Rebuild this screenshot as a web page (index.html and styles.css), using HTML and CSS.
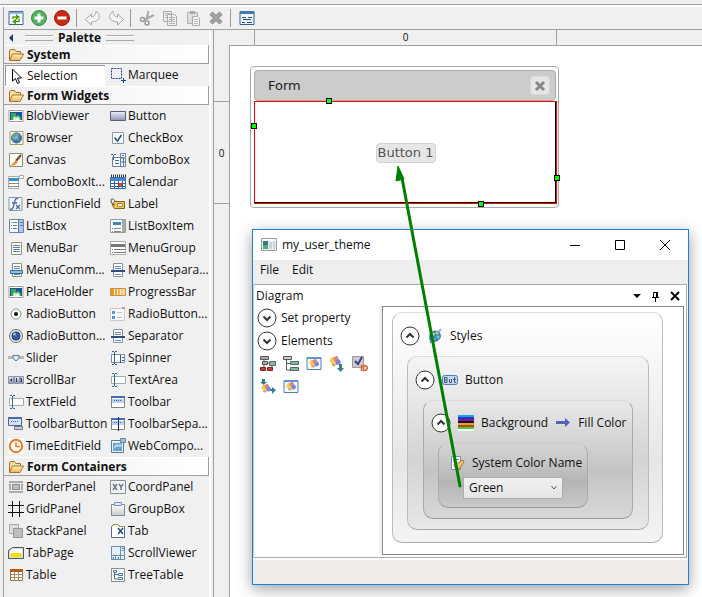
FILE: index.html
```html
<!DOCTYPE html>
<html lang="en">
<head>
<meta charset="utf-8">
<title>Form editor</title>
<link rel="stylesheet" href="styles.css">
</head>
<body>
<svg class="sprite" aria-hidden="true">
  <defs>
    <linearGradient id="gold" x2="0" y2="1"><stop offset="0" stop-color="#fff3c4"/><stop offset="1" stop-color="#edb54f"/></linearGradient>
    <linearGradient id="steel" x2="0" y2="1"><stop offset="0" stop-color="#eef2fa"/><stop offset="1" stop-color="#8c93b5"/></linearGradient>
    <linearGradient id="silver" x2="0" y2="1"><stop offset="0" stop-color="#fff"/><stop offset="1" stop-color="#ccc"/></linearGradient>
    <linearGradient id="orange" x2="1"><stop offset="0" stop-color="#ea8a12"/><stop offset="1" stop-color="#ffd48a"/></linearGradient>
    <radialGradient id="globe" cx=".35" cy=".3"><stop offset="0" stop-color="#d4ecff"/><stop offset="1" stop-color="#3672ab"/></radialGradient>
  </defs>
  <symbol id="folder" viewBox="0 0 16 16"><path d="M1.5 13V4l1-1.500h4L8 4.500h4.500V7" fill="#f7dfa0" stroke="#a8702c"/><path d="M1.500 13.500 4.500 7h11l-3.500 6.500z" fill="url(#gold)" stroke="#a8702c"/></symbol>
  <symbol id="reload" viewBox="0 0 16 16"><path fill="#fff" stroke="#3c6292" d="M1 1.500h14v13H1z"/><path fill="#88b7e5" d="M2 2h12v2H2z"/><path fill="none" stroke="#529b10" stroke-width="1.500" d="M5 9V7h4M11 9v2.500H7"/><path fill="#529b10" d="m8 4 4 3-4 3zM8 8.500l-4 3 4 3z"/></symbol>
  <symbol id="add" viewBox="0 0 16 16"><circle cx="8" cy="8" r="7.500" fill="#51b15d" stroke="#3a8e47"/><path stroke="#fff" stroke-width="3" d="M8 3.500v9M3.500 8h9"/></symbol>
  <symbol id="remove" viewBox="0 0 16 16"><circle cx="8" cy="8" r="7.500" fill="#c82b13" stroke="#a51c0c"/><path stroke="#fff" stroke-width="3" d="M3.500 8h9"/></symbol>
  <symbol id="undo" viewBox="0 0 16 16"><path d="M.5 9.500 6.500 4v3c2.500-.3 4.500-2 4.500-6 5 4.500 5 10-4.500 11v3z" fill="#f5f5f5" stroke="#a5a5a5"/></symbol>
  <symbol id="redo" viewBox="0 0 16 16"><path d="M15.500 9.500 9.500 4v3C7 6.700 5 5 5 1 0 5.500 0 11 9.500 12v3z" fill="#f5f5f5" stroke="#a5a5a5"/></symbol>
  <symbol id="cut" viewBox="0 0 16 16"><path d="m9.500 1-2 8M15 5 6 9.500" stroke="#a9a9a9" stroke-width="2"/><circle cx="3.500" cy="9.500" r="2" fill="none" stroke="#999" stroke-width="1.500"/><circle cx="8" cy="13" r="2" fill="none" stroke="#999" stroke-width="1.500"/></symbol>
  <symbol id="copy" viewBox="0 0 16 16"><path fill="#eee" stroke="#aaa" d="M1.500 1.500h8v10h-8zM5.500 4.500h7l2 2v9h-9z"/><path stroke="#b5b5b5" d="M3 3.500h5M3 5.500h2M3 7.500h2M7 7.500h6M7 9.500h6M7 11.500h6M7 13.500h6"/></symbol>
  <symbol id="paste" viewBox="0 0 16 16"><path fill="#ddd" stroke="#b0b0b0" d="M2.500 2.500h10v11h-10z"/><path fill="#aaa" d="M5 1h5v3H5z"/><path fill="#f3f3f3" stroke="#aaa" d="M7.500 6.500h5l2 2v7h-7z"/><path stroke="#bbb" d="M9 9.500h4M9 11.500h4M9 13.500h4"/></symbol>
  <symbol id="delete" viewBox="0 0 16 16"><path d="m3 3 10 10M13 3 3 13" stroke="#8b8b8b" stroke-width="4.500"/><path d="m3 3 10 10M13 3 3 13" stroke="#a3a3a3" stroke-width="2.500"/></symbol>
  <symbol id="layout" viewBox="0 0 16 16"><path fill="#f3f8ff" stroke="#2e5e9e" d="M1 1.500h14v13H1z"/><path fill="#3f79c0" d="M1 1h14v3H1z"/><path stroke="#244f83" d="M3 7.500h4M9 7.500h4M4 9.500h8M3 12.500h3M8 12.500h5"/></symbol>
  <symbol id="cursor" viewBox="0 0 16 16"><path fill="#fff" stroke="#000" d="M3.500 1v12l3-2.500 2 5 2-1-2-4.500h4z"/></symbol>
  <symbol id="marquee" viewBox="0 0 16 16"><path fill="none" stroke="#173e93" stroke-dasharray="2 1" d="M1.500 1.500h10v10h-10z"/><path stroke="#173e93" d="M11 13.500h5M13.500 11v5"/></symbol>
  <symbol id="picture" viewBox="0 0 16 16"><path fill="#fff" d="M0 1h16v14H0z"/><path fill="#fff" stroke="#999" d="M1 2.500h14v11H1z"/><path fill="#1653a1" d="M2 4h12v8H2z"/><path fill="#39a94b" d="M3 5h5v3l2-1 3 2v3H3z"/><path fill="#e5f3ed" d="m5 12 1-4 2 2 2-2 2 4z"/></symbol>
  <symbol id="pushbutton" viewBox="0 0 16 16"><path fill="url(#steel)" stroke="#565e7a" d="M.5 3.500h15v9H.500z"/></symbol>
  <symbol id="browser" viewBox="0 0 16 16"><path fill="#f5f3e9" stroke="#a49c73" d="M2 1.500h13v13H2z"/><circle cx="8.500" cy="8" r="5" fill="url(#globe)" stroke="#416f92"/><path fill="#63a371" d="m5 5 3-1 2 2-3 1-1 2zM9 8l3 1-2 3z"/></symbol>
  <symbol id="check" viewBox="0 0 16 16"><path fill="#fff" stroke="#8099b4" d="M2.500 2.500h11v11h-11z"/><path fill="none" stroke="#24496b" stroke-width="1.500" d="m4.500 7.500 3 3.500 4-6"/></symbol>
  <symbol id="canvas" viewBox="0 0 16 16"><path fill="#fff" stroke="#8f916d" d="M1.500 1.500h13v13h-13z"/><path stroke="#6b4326" stroke-width="2" d="m13 3-5 6"/><path fill="#e6913c" d="m8 8 2 2-3 3-5 1 3-3z"/></symbol>
  <symbol id="combo" viewBox="0 0 16 16"><path fill="#f4f7fc" stroke="#6684a9" d="M2.500 5.500h11v9h-11zM10.500 1.500h5v13h-5z"/><path fill="none" stroke="#466c96" d="M1 2.500h2m1 0h2M3.500 3v5M5 8.500h4M5 11.500h4M11 6h4M12 3l1 1 1-1M11 10h4"/></symbol>
  <symbol id="comboitem" viewBox="0 0 16 16"><path fill="#fff" stroke="#aaa" d="M.5 2.500h10v12H.500zM11.500 1.500h4v3h-4z"/><path fill="#388fc9" d="M1 4h10v3H1z"/><path stroke="#888" stroke-width="1" d="M1 9.500h10M1 12.500h10"/></symbol>
  <symbol id="calendar" viewBox="0 0 16 16"><path stroke="#333" stroke-dasharray="1 1" stroke-width="3" d="M1 2h15"/><path fill="#fff" stroke="#376aad" d="M.5 3.500h15v11H.500z"/><path fill="#4384cc" d="M1 4h14v3H1z"/><path fill="none" stroke="#3a5f94" d="M4.500 7v8M8.500 7v8M12.500 7v8M1 9.500h15M1 12.500h15"/><path fill="#e64b17" d="M9 9h3v3H9z"/></symbol>
  <symbol id="function" viewBox="0 0 16 16"><path fill="#f4f7ff" stroke="#8793ae" d="M1 1.500h13v13H1z"/><path fill="none" stroke="#4f669e" stroke-width="1.300" d="M10 3C7 1 7 5 5.500 10S3 13 2 13M4 7h5M8 9l4 4m0-4-4 4"/></symbol>
  <symbol id="tag" viewBox="0 0 16 16"><path fill="#f2c85c" stroke="#87621e" d="M4.500 5.500h10v7h-10L2 9z"/><path fill="#fff4cc" stroke="#b28631" d="M7.500 7.500h5v3h-5z"/><path fill="none" stroke="#50472c" d="M6 6C3 2 1 2 1 5s3 4 4 4"/></symbol>
  <symbol id="list" viewBox="0 0 16 16"><path fill="#fff" stroke="#6e86a6" d="M1.500 1.500h14v13h-14z"/><path fill="#acc6e8" d="M11 2h4v12h-4z"/><path stroke="#557aa9" d="M3 4.500h1m1 0h4M3 7.500h1m1 0h4M3 10.500h1m1 0h4M10.500 1v14M12 4.500h3M12 7.500h3"/></symbol>
  <symbol id="listitem" viewBox="0 0 16 16"><path fill="#fff" stroke="#9b9b9b" d="M.5 1.500h15v13H.500z"/><path fill="#aaa" d="M12 2h3v12h-3z"/><path fill="#328bc5" d="M3 4h8v3H3z"/><path stroke="#888" stroke-dasharray="1 1 9 0" d="M2 10.500h9M2 13.500h9"/></symbol>
  <symbol id="page" viewBox="0 0 16 16"><path fill="#fff" stroke="#91966f" d="M3.500 2.500h10v12h-10z"/><path stroke="#5f80ad" d="M5 5.500h7M5 7.500h7M5 9.500h7M5 11.500h7"/></symbol>
  <symbol id="group" viewBox="0 0 16 16"><path fill="#fff" stroke="#aaa" d="M.5 1.500h15v13H.500z"/><path fill="#777" d="M1 4h14v3H1z"/><path stroke="#777" stroke-dasharray="1 1 11 0" d="M2 9.500h13M2 12.500h13"/></symbol>
  <symbol id="command" viewBox="0 0 16 16"><path fill="#fff" stroke="#8c936d" d="M4.500 1.500h9v13h-9z"/><path stroke="#6886b3" d="M6 4.500h6M6 6.500h6M6 12.500h6"/><path fill="#92bfe7" stroke="#356da7" d="M2.500 8.500h12v3h-12z"/></symbol>
  <symbol id="separator" viewBox="0 0 16 16"><path fill="#fff" stroke="#8591a3" d="M3.500 1.500h9v13h-9z"/><path stroke="#6886b3" d="M5 4.500h6M5 6.500h6M5 12.500h6"/><path fill="#294e84" d="M1 8h14v2H1z"/></symbol>
  <symbol id="progress" viewBox="0 0 16 16"><path fill="url(#orange)" stroke="#c39256" d="M.5 4.500h15v7H.500z"/><path stroke="#fff0cc" d="M4.500 5v6M7.500 5v6M10.500 5v6M13.500 5v6"/></symbol>
  <symbol id="radio" viewBox="0 0 16 16"><circle cx="8" cy="8" r="5" fill="#fff" stroke="#7d9a84"/><circle cx="8" cy="8" r="2" fill="#111"/></symbol>
  <symbol id="radiolist" viewBox="0 0 16 16"><path fill="#fff" stroke="#ccc" d="M.5 2.500h14v12H.500z"/><path fill="#5595e8" d="M2 5h3v3H2zM2 10h3v3H2z"/><path stroke="#bbb" d="M7 6.500h5M7 11.500h5"/><path fill="#db8285" d="M12 1h3v2h-3z"/></symbol>
  <symbol id="radiogroup" viewBox="0 0 16 16"><circle cx="8" cy="8" r="6.500" fill="#ddd" stroke="#777"/><circle cx="8" cy="8" r="4" fill="#315fb0" stroke="#20375c"/><circle cx="6.500" cy="6" r="1.500" fill="#91bcf1"/></symbol>
  <symbol id="slider" viewBox="0 0 16 16"><path stroke="#bbb" stroke-width="3" d="M0 7.500h16"/><path fill="#d5e8f5" stroke="#547d9b" d="M5 5.500h6v3L8 11 5 8.500z"/></symbol>
  <symbol id="spinner" viewBox="0 0 16 16"><path fill="#fff" stroke="#6e91ba" d="M1.500 4.500h13v8h-13z"/><path fill="none" stroke="#395e8c" d="M2 1.500h2m1 0h2M4.500 2v12M2 14.500h2m1 0h2M10.500 5v8M12 7.500h2M12 10.500h2"/></symbol>
  <symbol id="scrollbar" viewBox="0 0 16 16"><path fill="url(#steel)" stroke="#8a8eac" d="M.5 4.500h5v7h-5zM6.500 4.500h5v7h-5zM12.500 4.500h3v7h-3z"/><path fill="#29334f" d="M4 6v4L2 8zM8 6h1v4H8zM13 6h1v4h-1z"/></symbol>
  <symbol id="field" viewBox="0 0 16 16"><path fill="#fff" stroke="#9baea8" d="M1.500 4.500h14v7h-14z"/><path fill="none" stroke="#36669b" d="M2 1.500h2m1 0h2M4.500 2v12M2 14.500h2m1 0h2"/></symbol>
  <symbol id="toolbar" viewBox="0 0 16 16"><path fill="#fff" stroke="#7b8972" d="M1.500 2.500h13v11h-13z"/><path fill="#3e6fae" d="M1 2h14v2H1z"/><path fill="#bad0ed" d="M2 5h12v4H2z"/><path stroke="#415f89" stroke-dasharray="1 1" d="M4 6.500h8"/></symbol>
  <symbol id="toolbutton" viewBox="0 0 16 16"><path fill="#d6e4f5" stroke="#416a9e" d="M.5 1.500h13v8H.500z"/><path fill="#426fad" d="M0 1h14v2H0z"/><path stroke="#415f89" stroke-dasharray="1 1" d="M3 5.500h8"/><path fill="#c9ccdc" stroke="#707690" d="M6.500 10.500h8v3h-8z"/></symbol>
  <symbol id="clock" viewBox="0 0 16 16"><path fill="#fff" d="M0 0h16v16H0z"/><circle cx="8" cy="8" r="6.200" fill="#fff" stroke="#f17620" stroke-width="2"/><path fill="none" stroke="#f17620" stroke-width="1.500" d="M8 4v4.500h4"/></symbol>
  <symbol id="web" viewBox="0 0 16 16"><path fill="#e9f3fb" stroke="#577e99" d="M1.500 2.500h12v12h-12z"/><path fill="#69a2ce" d="M3 5h9v8H3z"/><path fill="#9ebdda" stroke="#6a879e" d="M10.500.500h5v4h-5z"/><path fill="#b7d5ea" d="M4 8c3-4 6 0 8-2v2c-3 2-5-1-8 3z"/></symbol>
  <symbol id="border" viewBox="0 0 16 16"><path fill="none" stroke="#aaa" stroke-width="2" d="M1 3h14M1 13h14M2 5v6M14 5v6"/><path fill="#bbb" stroke="#888" d="M4.500 5.500h7v5h-7z"/></symbol>
  <symbol id="coord" viewBox="0 0 16 16"><path fill="#f0f4f7" stroke="#879195" d="M.5 1.500h15v13H.500z"/><path fill="none" stroke="#707989" stroke-width="1.500" d="m3 5 4 6m0-6-4 6M9 5l2 3 2-3M11 8v3"/></symbol>
  <symbol id="grid" viewBox="0 0 16 16"><path fill="none" stroke="#111" d="M4.500 0v16M11.500 0v16M0 4.500h16M0 11.500h16"/></symbol>
  <symbol id="groupbox" viewBox="0 0 16 16"><path fill="url(#silver)" stroke="#7d8b9d" d="M1.500 3.500h13v11h-13z"/><path fill="#e5eeff" stroke="#6c93c7" d="M4.500 1.500h7v3h-7z"/></symbol>
  <symbol id="stack" viewBox="0 0 16 16"><path fill="#ddd" stroke="#aaa" d="M1.500 1.500h9v9h-9z"/><path fill="#bdbdbd" stroke="#969696" d="M5.500 5.500h9v9h-9z"/></symbol>
  <symbol id="tab" viewBox="0 0 16 16"><path fill="#fff" stroke="#596b87" d="M1.500 14.500v-11l2-2h4l2 2h5v11z"/><path stroke="#a99847" d="M2 3.500 4 1.500h4l2 2h4" fill="none"/><path stroke="#254979" stroke-width="1.500" d="m8 5 5 6m0-6-5 6"/></symbol>
  <symbol id="tabpage" viewBox="0 0 16 16"><path fill="#ddd" stroke="#555" d="M.5 13.500v-8l4-3h11v11z"/><path fill="#fff" d="M4 4h10v4H2z"/><path fill="#e8e500" d="M3 8h10v4H3z"/></symbol>
  <symbol id="scrollviewer" viewBox="0 0 16 16"><path fill="#e6eef8" stroke="#6a8bac" d="M1.500 1.500h13v13h-13z"/><path fill="none" stroke="#6a8bac" d="M10.500 1v14M1 10.500h14M12 5.500h3M5.500 11v4"/><path fill="#37699c" d="m12 4 1-2 1 2zM2 13l2-1v2zM9 12v2l-2-1z"/></symbol>
  <symbol id="table" viewBox="0 0 16 16"><path fill="#fff" stroke="#9b6e43" d="M2.500 2.500h12v11h-12z"/><path fill="#b65a16" d="M2 2h13v3H2z"/><path fill="none" stroke="#a88b69" d="M6.500 5v9M10.500 5v9M3 7.500h12M3 10.500h12"/></symbol>
  <symbol id="treetable" viewBox="0 0 16 16"><path fill="#fff" stroke="#83918c" d="M1.500 1.500h13v13h-13z"/><path fill="none" stroke="#47749f" d="M4.500 5v7h4M4.500 7.500h4M3.500 3.500h3v2h-3zM8.500 6.500h4v2h-4zM8.500 10.500h4v2h-4z"/></symbol>
  <symbol id="app" viewBox="0 0 16 16"><path fill="#e8eff1" stroke="#939ba3" d="M.5 1.500h15v12H.500z"/><path fill="#fff" d="M1 2h14v2H1z"/><path fill="#347b83" d="M2 4h5v8H2z"/><path fill="#56a777" d="M2 8h5v4H2z"/><path fill="#ccd3da" d="M8 5h3v7H8zM12 4h2v8h-2z"/></symbol>
  <symbol id="down" viewBox="0 0 20 20"><circle cx="10" cy="10" r="9" fill="#fff" stroke="#333"/><path fill="none" stroke="#333" stroke-width="2" d="m6.500 8.500 3.500 3.500 3.500-3.500"/></symbol>
  <symbol id="up" viewBox="0 0 20 20"><circle cx="10" cy="10" r="9" fill="#fff" stroke="#333"/><path fill="none" stroke="#333" stroke-width="2" d="m6.500 11.500 3.500-3.500 3.500 3.500"/></symbol>
  <symbol id="treered" viewBox="0 0 16 16"><path fill="none" stroke="#555" d="M4 3v4h8v6M4 7v6"/><path fill="#aaa" stroke="#555" d="M.5.500h8v3h-8zM2.500 5.500h5v3h-5z"/><path fill="#87b9a0" stroke="#526c60" d="M9.500 5.500h6v4h-6z"/><path fill="#d53535" stroke="#892424" d="M.5 11.500h5v3h-5zM7.500 11.500h5v3h-5z"/></symbol>
  <symbol id="treegreen" viewBox="0 0 16 16"><path fill="none" stroke="#555" d="M3.500 3v11H9M3.500 7.500H9"/><path fill="#ccc" stroke="#555" d="M.5.500h8v3h-8z"/><path fill="#87b9a0" stroke="#526c60" d="M7.500 5.500h8v3h-8zM7.500 11.500h8v3h-8z"/></symbol>
  <symbol id="blocks" viewBox="0 0 16 16"><path fill="#f1cf4d" d="m2 5 3-3 4 2v4l-4 2-3-2z"/><path fill="#ef7777" d="m6 3 4-2 2 2-2 3-3 1z"/><path fill="#7d83d9" d="m8 7 4-3 3 4-2 3H9z"/><path fill="#e5a43e" d="m5 9 4 1-1 3-4-1z"/></symbol>
  <symbol id="winblocks" viewBox="0 0 16 16"><path fill="#f4f9ff" stroke="#4d7fba" d="M1 1.500h14v12H1z"/><path fill="#5c95d3" d="M1 1h14v2H1z"/><use href="#blocks" x="2" y="2" width="12" height="12"/></symbol>
  <symbol id="blocksdown" viewBox="0 0 16 16"><use href="#blocks" x="-1" y="-1" width="14" height="14"/><path fill="#367d91" d="M10 8h3v4h2l-3.500 4L8 12h2z"/></symbol>
  <symbol id="checkid" viewBox="0 0 16 16"><path fill="#ccc" stroke="#999" d="M.5.500h11v11H.500z"/><path fill="none" stroke="#38458f" stroke-width="2" d="m3 5 3 3 4-7"/><path fill="none" stroke="#df5832" stroke-width="1.500" d="M9.500 9v6M11.500 9.500v5c5 0 5-5 0-5z"/></symbol>
  <symbol id="blocksnode" viewBox="0 0 16 16"><path fill="#367d91" d="M2 0h3v3h2L3.500 6 0 3h2zM9 10h3V8l4 3-4 4v-3H9z"/><use href="#blocks" y="4" width="12" height="12"/></symbol>
  <symbol id="styles" viewBox="0 0 16 16"><path stroke="#9a9fd5" stroke-width="2" d="m3 15 11-14"/><path fill="#4389bd" d="M2 9c0-6 8-9 11-4 3 4-1 9-6 9-3 0-5-1-5-5z"/><circle cx="6" cy="6" r="1.500" fill="#d9edb0"/><circle cx="10" cy="5" r="1.500" fill="#e4c15b"/><circle cx="11" cy="9" r="1.500" fill="#73c2e8"/><circle cx="6" cy="11" r="1.500" fill="#c6d9eb"/></symbol>
  <symbol id="but" viewBox="0 0 16 16"><rect x=".5" y="3.500" width="15" height="9" rx="2" fill="#c4d9f3" stroke="#587cae"/><path fill="none" stroke="#445875" d="M2.500 5v6M3 5.500h2v5H3M3 8h2M7.500 7v3.500h2V7M12.500 5v5.500H14M11 7.500h3"/></symbol>
  <symbol id="stripes" viewBox="0 0 16 16"><path fill="#16a7dc" d="M0 0h16v2H0z"/><path fill="#2432cf" d="M0 2h16v2H0z"/><path fill="#7f179b" d="M0 4h16v2H0z"/><path fill="#171217" d="M0 6h16v2H0z"/><path fill="#e9a12d" d="M0 8h16v2H0z"/><path fill="#b64722" d="M0 10h16v2H0z"/><path fill="#45ca3a" d="M0 12h16v2H0z"/><path fill="#fff" d="M0 14h16v2H0z"/></symbol>
  <symbol id="edit" viewBox="0 0 16 16"><path fill="#fff" stroke="#7790ac" d="M2.500 1.500h9v13h-9z"/><path stroke="#4c83ba" d="M4 4.500h6M4 6.500h4"/><path fill="#f2c66d" stroke="#a67735" d="m5 9 4-1 5-3 1 2-4 6-4 2z"/></symbol>
  <symbol id="arrow" viewBox="0 0 16 16"><path fill="#5262bd" d="M1 6h9V3l5 4.500-5 4.500V9H1z"/></symbol>
</svg>

<div class="strip"></div>
<div class="workbench">
  <div class="toolbar" role="toolbar">
    <button aria-label="Reload"><svg><use href="#reload"/></svg></button>
    <button aria-label="Add"><svg><use href="#add"/></svg></button>
    <button aria-label="Remove"><svg><use href="#remove"/></svg></button>
    <span class="divider"></span>
    <button aria-label="Undo"><svg><use href="#undo"/></svg></button>
    <button aria-label="Redo"><svg><use href="#redo"/></svg></button>
    <span class="divider"></span>
    <button aria-label="Cut"><svg><use href="#cut"/></svg></button>
    <button aria-label="Copy"><svg><use href="#copy"/></svg></button>
    <button aria-label="Paste"><svg><use href="#paste"/></svg></button>
    <button aria-label="Delete"><svg><use href="#delete"/></svg></button>
    <span class="divider"></span>
    <button aria-label="Layout"><svg><use href="#layout"/></svg></button>
  </div>
  <div class="main">
    <aside class="palette">
      <header class="palette-title"><button class="collapse" aria-label="Collapse palette"></button><i class="grip"></i><b>Palette</b><i class="grip"></i></header>
      <h2><svg><use href="#folder"/></svg>System</h2>
      <div class="items tools">
        <button class="selected"><svg><use href="#cursor"/></svg>Selection</button><button><svg><use href="#marquee"/></svg>Marquee</button>
      </div>
      <h2><svg><use href="#folder"/></svg>Form Widgets</h2>
      <div class="items">
        <button><svg><use href="#picture"/></svg>BlobViewer</button><button><svg><use href="#pushbutton"/></svg>Button</button>
        <button><svg><use href="#browser"/></svg>Browser</button><button><svg><use href="#check"/></svg>CheckBox</button>
        <button><svg><use href="#canvas"/></svg>Canvas</button><button><svg><use href="#combo"/></svg>ComboBox</button>
        <button><svg><use href="#comboitem"/></svg>ComboBoxIt...</button><button><svg><use href="#calendar"/></svg>Calendar</button>
        <button><svg><use href="#function"/></svg>FunctionField</button><button><svg><use href="#tag"/></svg>Label</button>
        <button><svg><use href="#list"/></svg>ListBox</button><button><svg><use href="#listitem"/></svg>ListBoxItem</button>
        <button><svg><use href="#page"/></svg>MenuBar</button><button><svg><use href="#group"/></svg>MenuGroup</button>
        <button><svg><use href="#command"/></svg>MenuComm...</button><button><svg><use href="#separator"/></svg>MenuSepara...</button>
        <button><svg><use href="#picture"/></svg>PlaceHolder</button><button><svg><use href="#progress"/></svg>ProgressBar</button>
        <button><svg><use href="#radio"/></svg>RadioButton</button><button><svg><use href="#radiolist"/></svg>RadioButton...</button>
        <button><svg><use href="#radiogroup"/></svg>RadioButton...</button><button><svg><use href="#separator"/></svg>Separator</button>
        <button><svg><use href="#slider"/></svg>Slider</button><button><svg><use href="#spinner"/></svg>Spinner</button>
        <button><svg><use href="#scrollbar"/></svg>ScrollBar</button><button><svg><use href="#field"/></svg>TextArea</button>
        <button><svg><use href="#field"/></svg>TextField</button><button><svg><use href="#toolbar"/></svg>Toolbar</button>
        <button><svg><use href="#toolbutton"/></svg>ToolbarButton</button><button><svg><use href="#toolbar"/><path stroke="#183253" d="M8.500 1v14"/></svg>ToolbarSepa...</button>
        <button><svg><use href="#clock"/></svg>TimeEditField</button><button><svg><use href="#web"/></svg>WebCompo...</button>
      </div>
      <h2><svg><use href="#folder"/></svg>Form Containers</h2>
      <div class="items">
        <button><svg><use href="#border"/></svg>BorderPanel</button><button><svg><use href="#coord"/></svg>CoordPanel</button>
        <button><svg><use href="#grid"/></svg>GridPanel</button><button><svg><use href="#groupbox"/></svg>GroupBox</button>
        <button><svg><use href="#stack"/></svg>StackPanel</button><button><svg><use href="#tab"/></svg>Tab</button>
        <button><svg><use href="#tabpage"/></svg>TabPage</button><button><svg><use href="#scrollviewer"/></svg>ScrollViewer</button>
        <button><svg><use href="#table"/></svg>Table</button><button><svg><use href="#treetable"/></svg>TreeTable</button>
      </div>
    </aside>
    <div class="editor">
      <div class="ruler-x"><span>0</span></div>
      <div class="ruler-y"><span>0</span></div>
      <main class="canvas">
        <section class="form">
          <header><span>Form</span><button aria-label="Close form"><svg viewBox="0 0 12 12"><path d="m2 2 8 8M10 2l-8 8"/></svg></button></header>
          <div class="form-body">
            <button>Button 1</button>
            <i class="handle h-top"></i><i class="handle h-left"></i><i class="handle h-right"></i><i class="handle h-bottom"></i>
          </div>
        </section>
        <section class="window">
          <header class="titlebar">
            <svg><use href="#app"/></svg><span>my_user_theme</span>
            <button aria-label="Minimize"><svg viewBox="0 0 12 12"><path d="M1 6.500h10"/></svg></button>
            <button aria-label="Maximize"><svg viewBox="0 0 12 12"><path d="M1.500 1.500h9v9h-9z"/></svg></button>
            <button aria-label="Close"><svg viewBox="0 0 12 12"><path d="m1 1 10 10M11 1 1 11"/></svg></button>
          </header>
          <nav class="menu"><button>File</button><button>Edit</button></nav>
          <div class="pane">
            <header class="pane-title"><span>Diagram</span>
              <button aria-label="Pane menu"><svg viewBox="0 0 12 12"><path class="solid" d="M2 4h8L6 8z"/></svg></button>
              <button aria-label="Pin"><svg viewBox="0 0 12 12"><path d="M3.500 7V2.500h4V7M2 7.500h7M5.500 8v4M6.500 2v5"/></svg></button>
              <button aria-label="Close pane"><svg viewBox="0 0 12 12"><path class="bold" d="m2 2 8 8M10 2l-8 8"/></svg></button>
            </header>
            <div class="pane-body">
              <div class="toolbox">
                <button class="expander"><svg class="round"><use href="#down"/></svg>Set property</button>
                <button class="expander"><svg class="round"><use href="#down"/></svg>Elements</button>
                <div class="shapes">
                  <button aria-label="Tree"><svg><use href="#treered"/></svg></button>
                  <button aria-label="Branch"><svg><use href="#treegreen"/></svg></button>
                  <button aria-label="Window"><svg><use href="#winblocks"/></svg></button>
                  <button aria-label="Import"><svg><use href="#blocksdown"/></svg></button>
                  <button aria-label="Identifier"><svg><use href="#checkid"/></svg></button>
                  <button aria-label="Node"><svg><use href="#blocksnode"/></svg></button>
                  <button aria-label="View"><svg><use href="#winblocks"/></svg></button>
                </div>
              </div>
              <div class="diagram">
                <div class="node styles">
                  <div class="node-head"><button aria-label="Collapse Styles"><svg class="round"><use href="#up"/></svg></button><svg><use href="#styles"/></svg>Styles</div>
                  <div class="node button">
                    <div class="node-head"><button aria-label="Collapse Button"><svg class="round"><use href="#up"/></svg></button><svg><use href="#but"/></svg>Button</div>
                    <div class="node background">
                      <div class="node-head"><button aria-label="Collapse Background"><svg class="round"><use href="#up"/></svg></button><svg><use href="#stripes"/></svg>Background<svg><use href="#arrow"/></svg>Fill Color</div>
                      <div class="node color">
                        <label class="color-label" for="color"><svg><use href="#edit"/></svg>System Color Name</label>
                        <div class="select"><select id="color"><option>Green</option></select><svg viewBox="0 0 8 8"><path d="m1.500 2 2.500 3L6.500 2"/></svg></div>
                      </div>
                    </div>
                  </div>
                </div>
              </div>
            </div>
          </div>
          <footer class="status"></footer>
        </section>
        <svg class="pointer" viewBox="0 0 240 450" aria-hidden="true"><path d="m230 440-58-308" stroke="#008000" stroke-width="3" stroke-linecap="round"/><path d="m168 120-2 15 8-2z" fill="#008000" stroke="#008000"/></svg>
      </main>
    </div>
  </div>
</div>
</body>
</html>
```
FILE: styles.css
```css
* { box-sizing: border-box; }
body {
  margin: 0;
  min-height: 100vh;
  display: flex;
  flex-direction: column;
  background: #f0f0f0;
  color: #111;
  font: 12px/16px "Open Sans", "Noto Sans", sans-serif;
}
svg { width: 16px; height: 16px; flex: none; display: block; overflow: visible; }
.sprite { position: absolute; width: 0; height: 0; }
button {
  font: inherit;
  color: inherit;
  background: none;
  border: 0;
  padding: 0;
  display: flex;
  align-items: center;
  white-space: nowrap;
}
.strip { height: 7px; border-bottom: 2px solid #fff; box-shadow: inset 0 -1px #a0a0a0; }
.workbench { flex: 1; display: flex; flex-direction: column; margin-left: 3px; border-left: 1px solid #a0a0a0; }
.toolbar { height: 23px; display: flex; align-items: center; border-bottom: 1px solid #a0a0a0; }
.toolbar button { width: 23px; height: 22px; justify-content: center; }
.divider { width: 8px; height: 18px; border-left: 1px solid #999; margin-left: 3px; margin-right: -3px; }
.main { flex: 1; display: flex; }

.palette { width: 210px; flex: none; border-right: 1px solid #a0a0a0; box-shadow: inset -2px 0 #f0f0f0, inset -4px 0 #fff; }
.palette-title { height: 15px; display: flex; align-items: center; gap: 5px; padding-left: 5px; }
.collapse { border: 4px solid transparent; border-right-color: #123e75; border-left: 0; margin-right: 7px; }
.grip { width: 28px; height: 6px; border: solid #aaa; border-width: 1px 0; box-shadow: inset 0 1px #fff; }
h2 {
  display: flex;
  align-items: center;
  gap: 3px;
  height: 19px;
  margin: 0 4px 0 0;
  padding: 2px 0 0 4px;
  font-size: 12px;
  line-height: 16px;
  border: solid #a0a0a0;
  border-width: 0 1px 1px 0;
  background: linear-gradient(90deg, #eee, #fff);
  box-shadow: inset 0 1px #fff;
}
.items { display: grid; grid-template-columns: 102px 102px; padding-left: 1px; }
.items button { height: 22px; gap: 2px; padding-left: 3px; }
.items .selected { width: 100px; height: 21px; align-self: end; background: #fff; border: solid #999; border-width: 1px 0 0 1px; }

.editor { flex: 1; min-width: 0; display: grid; grid-template: 15px 1fr / 15px 1fr; font-size: 10px; }
.ruler-x { grid-column: 2; margin-left: 25px; width: 303px; border: solid #a0a0a0; border-width: 0 1px; text-align: center; line-height: 14px; }
.ruler-y { grid-row: 2; margin-top: 56px; height: 103px; border: solid #a0a0a0; border-width: 1px 0; display: grid; place-items: center; }
.canvas { grid-area: 2 / 2; position: relative; overflow: hidden; background: #fff; border: solid #a0a0a0; border-width: 1px 0 0 1px; font-size: 12px; }

.form {
  position: absolute;
  left: 20px;
  top: 20px;
  width: 309px;
  padding: 3px;
  background: #fff;
  border: 1px solid #aaa;
  border-radius: 4px;
  font: 13px/16px "DejaVu Sans", sans-serif;
}
.form header { display: flex; align-items: center; justify-content: space-between; height: 31px; margin-right: -1px; padding: 0 5px 0 13px; background: #ccc; border: 1px solid #aaa; border-radius: 4px; color: #222; }
.form header button { width: 20px; height: 19px; justify-content: center; background: #e6e6e6; border: 1px solid #d8d8d8; border-radius: 3px; }
.form header svg { width: 12px; height: 12px; stroke: #888; stroke-width: 3; }
.form-body { position: relative; height: 103px; margin-right: -2px; display: grid; place-items: center; border: 1px solid #f00; box-shadow: inset -1px -1px #000; }
.form-body button { height: 20px; width: 60px; justify-content: center; background: #e6e6e6; border: 1px solid #d3d3d3; border-radius: 4px; color: #555; }
.handle { position: absolute; width: 6px; height: 6px; background: #0f0; border: 1px solid #000; }
.h-top { left: 71px; top: -4px; }
.h-left { left: -4px; top: 21px; }
.h-right { right: -4px; top: 73px; }
.h-bottom { left: 223px; bottom: -4px; }

.window {
  position: absolute;
  left: 22px;
  top: 183px;
  width: 437px;
  background: #fff;
  border: 1px solid #1883d7;
  box-shadow: 0 4px 14px rgba(0, 0, 0, .38);
}
.titlebar { display: flex; align-items: center; height: 30px; padding: 0 1px 0 8px; }
.titlebar span { flex: 1; padding-left: 5px; }
.titlebar button { width: 45px; height: 30px; justify-content: center; }
.titlebar button svg, .pane-title svg { width: 12px; height: 12px; fill: none; stroke: #000; }
.menu { display: flex; gap: 13px; height: 24px; padding: 0 0 4px 7px; background: #eee; }
.pane { margin-right: 1px; border: 1px solid #aaa; border-left-color: #ccc; padding-right: 2px; padding-bottom: 2px; }
.pane-title { display: flex; align-items: center; height: 21px; padding-left: 2px; }
.pane-title span { flex: 1; }
.pane-title button { width: 19px; justify-content: center; }
.solid { fill: #000; stroke: none; }
.bold { stroke-width: 2; }
.pane-body { display: grid; grid-template-columns: 128px 1fr; }
.toolbox { border-right: 3px solid #f0f0f0; padding-left: 3px; }
.expander { height: 23px; gap: 4px; }
.round { width: 20px; height: 20px; }
.shapes { display: grid; grid-template-columns: repeat(5, 23px); grid-auto-rows: 23px; padding-left: 3px; }
.diagram { min-width: 0; border: 1px solid #828790; padding: 5px 20px 11px 9px; }
.node { border: 1px solid #aaa; border-radius: 10px; }
.node-head { display: flex; align-items: center; gap: 7px; height: 43px; padding: 2px 0 0 7px; white-space: nowrap; }
.styles { border-color: #ddd #bbb #aaa; background: linear-gradient(#fff, #e6e6e6 65%, #f4f4f4); }
.button { margin: 0 13px 12px 14px; border-color: #ddd #bbb #aaa; background: linear-gradient(#f5f5f5, #d3d3d3 60%, #e8e8e8); }
.background { margin: 0 15px 10px; border-color: #ddd #aaa #999; background: linear-gradient(#e9e9e9, #c4c4c4 60%, #d8d8d8); }
.background .node-head { height: 42px; }
.color { height: 65px; margin: 0 44px 10px 14px; border-color: #ccc #aaa #999; background: linear-gradient(#d6d6d6, #b5b5b5 60%, #c9c9c9); }
.color-label { display: flex; align-items: center; gap: 7px; height: 33px; padding: 5px 0 0 10px; white-space: nowrap; }
.select { position: relative; width: 100px; margin-left: 24px; }
.select select { display: block; width: 100%; height: 22px; padding: 0 5px; appearance: none; border: 1px solid #acacac; border-radius: 0; background: linear-gradient(#f0f0f0, #e5e5e5); font: inherit; color: inherit; }
.select svg { position: absolute; right: 5px; top: 7px; width: 8px; height: 8px; fill: none; stroke: #555; stroke-width: 1; pointer-events: none; }
.status { height: 24px; margin-top: 2px; background: #f0eceb; }
.pointer { position: absolute; left: 0; top: 0; width: 240px; height: 450px; pointer-events: none; }
```
